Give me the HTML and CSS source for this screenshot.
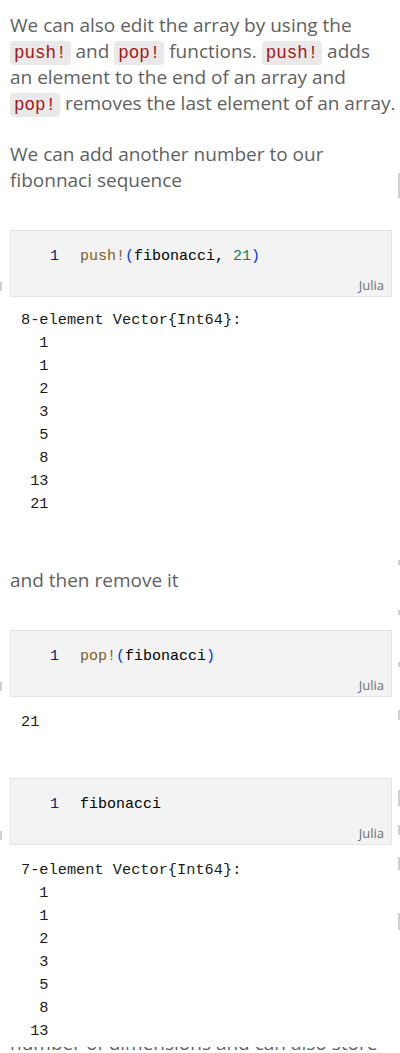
FILE: index.html
```html
<!DOCTYPE html>
<html>
<head>
<meta charset="utf-8">
<link rel="stylesheet" href="styles.css">
</head>
<body>
<div class="page">
  <p class="prose">We can also edit the array by using the <code class="ic">push!</code> and <code class="ic">pop!</code> functions. <code class="ic">push!</code> adds an&nbsp;element to the end of an array and <code class="ic">pop!</code> removes the last element of an array.</p>
  <p class="prose">We can add another number to our fibonnaci sequence</p>

  <div class="cell c1">
    <div class="code-line"><span class="ln">1</span><span class="fn">push!</span><span class="br">(</span><span class="id">fibonacci, </span><span class="num">21</span><span class="br">)</span></div>
    <div class="lang">Julia</div>
  </div>
  <pre class="out">8-element Vector{Int64}:
  1
  1
  2
  3
  5
  8
 13
 21</pre>

  <p class="prose p3">and then remove it</p>

  <div class="cell c2">
    <div class="code-line"><span class="ln">1</span><span class="fn">pop!</span><span class="br">(</span><span class="id">fibonacci</span><span class="br">)</span></div>
    <div class="lang">Julia</div>
  </div>
  <pre class="out out-one">21</pre>

  <div class="cell c3">
    <div class="code-line"><span class="ln">1</span><span class="id">fibonacci</span></div>
    <div class="lang">Julia</div>
  </div>
  <pre class="out out-last">7-element Vector{Int64}:
  1
  1
  2
  3
  5
  8
 13</pre>
  <div class="clip"><p class="prose clipped">number of dimensions and can also store</p></div>

  <span class="mark ml m1"></span>
  <span class="mark ml m2"></span>
  <span class="mark ml m3"></span>
  <span class="mark mr r1"></span>
  <span class="mark mr r2"></span>
  <span class="mark mr r3"></span>
  <span class="mark mr r4"></span>
  <span class="mark mr r5"></span>
  <span class="mark mr r6"></span>
  <span class="mark mr r7"></span>
  <span class="mark mr r8"></span>
  <span class="mark mr r9"></span>
</div>
</body>
</html>
```

FILE: styles.css
```css
html, body {
  margin: 0;
  padding: 0;
  background: #ffffff;
  overflow: hidden;
}
.page {
  position: relative;
  padding: 12px 2px 0 10px;
  height: 1053px;
  box-sizing: border-box;
  overflow: hidden;
}
.prose {
  margin: 0 0 25px 0;
  font-family: "Open Sans", "Noto Sans", sans-serif;
  font-size: 19px;
  line-height: 26px;
  color: #616161;
}
.ic {
  font-family: "Liberation Mono", monospace;
  font-size: 17.5px;
  line-height: 1;
  color: #a31515;
  background: #e9e9e9;
  border-radius: 4px;
  padding: 2px 4px;
}
.cell {
  background: #f3f3f3;
  border: 1px solid #e4e4e4;
  padding: 16px 7px 3px 0;
  margin: 37px 6px 0 0;
}
.code-line {
  font-family: "Liberation Mono", monospace;
  font-size: 15px;
  line-height: 20px;
  height: 20px;
  color: #000000;
  white-space: pre;
}
.ln {
  display: inline-block;
  width: 48px;
  text-align: right;
  padding-right: 21px;
  color: #0b216f;
}
.fn { color: #795e26; }
.br { color: #0431fa; }
.id { color: #000000; }
.num { color: #098658; }
.lang {
  margin-top: 10px;
  text-align: right;
  font-family: "Open Sans", "Noto Sans", sans-serif;
  font-size: 13px;
  line-height: 16px;
  color: #6f6f6f;
}
.out {
  margin: 12px 0 0 0;
  padding-left: 11px;
  font-family: "Liberation Mono", monospace;
  font-size: 15.3px;
  line-height: 23px;
  color: #1a1a1a;
}
.out-one { margin-top: 14px; }
.out-last { margin-top: 14px; }
.p3 { margin-top: 51px; margin-bottom: 0; }
.c2 { margin-top: 37px; }
.c3 { margin-top: 44px; }
.clip {
  height: 8px;
  overflow: hidden;
  margin-top: 4px;
}
.clipped {
  margin-top: -17px;
}
.mark {
  position: absolute;
  width: 2px;
  background: #d0d0d0;
}
.ml { left: 0; }
.mr { right: 0; }
.m1 { top: 282px; height: 9px; }
.m2 { top: 682px; height: 9px; }
.m3 { top: 831px; height: 9px; }
.r1 { top: 173px; height: 25px; }
.r2 { top: 560px; height: 5px; }
.r3 { top: 610px; height: 5px; }
.r4 { top: 662px; height: 5px; }
.r5 { top: 710px; height: 10px; }
.r6 { top: 790px; height: 16px; }
.r7 { top: 825px; height: 10px; }
.r8 { top: 857px; height: 13px; }
.r9 { top: 913px; height: 17px; }
```
